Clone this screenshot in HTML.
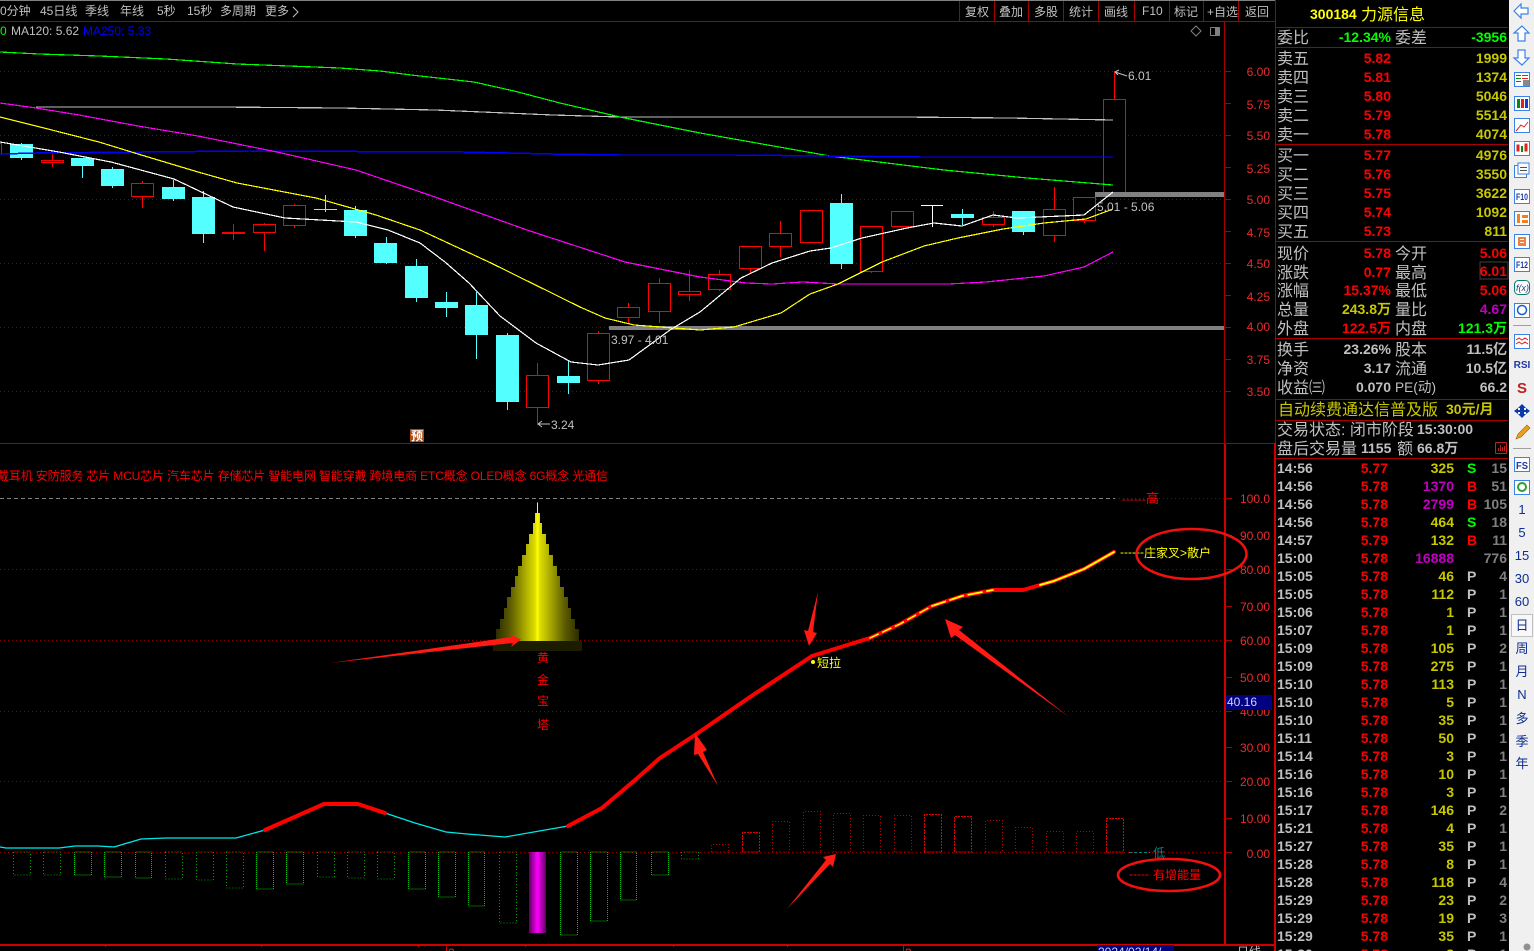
<!DOCTYPE html>
<html lang="zh"><head><meta charset="utf-8"><title>300184 力源信息</title>
<style>
html,body{margin:0;padding:0;background:#000;width:1534px;height:951px;overflow:hidden}
svg{position:absolute;left:0;top:0;display:block}
text{font-family:"Liberation Sans","WenQuanYi Zen Hei","Noto Sans CJK SC",sans-serif;white-space:pre}
.tb{font-size:12px;fill:#c0c0c0}
.ax{font-size:12px;fill:#ee2a2a;text-anchor:end}
.lb{font-size:16px;fill:#c0c0c0}
.n{font-size:14px;font-weight:bold;text-anchor:end}
.R{fill:#ff0000}.Y{fill:#c8c800}.G{fill:#00ff00}.W{fill:#c0c0c0}.M{fill:#c000c0}
.tk{font-size:13px;fill:#0b2f92;text-anchor:middle}
#ticks{position:absolute;left:1276px;top:459px;width:233px;height:492px;overflow:hidden;font:bold 14px/18px "Liberation Sans",sans-serif}
#ticks div{position:relative;height:18px}
#ticks span{position:absolute;top:0}
.t{left:1px;color:#c0c0c0}.p{right:121px;color:#f00}.v{right:55px;color:#c8c800}.v.m{color:#c000c0}
.l{left:191px;color:#c0c0c0}.l.g{color:#0f0}.l.r{color:#f00}.c{right:2px;color:#808080}
</style></head><body>
<svg width="1534" height="951" viewBox="0 0 1534 951" xmlns="http://www.w3.org/2000/svg">
<defs>
<linearGradient id="pg" gradientUnits="userSpaceOnUse" x1="168" x2="417" y1="0" y2="0">
<stop offset="0" stop-color="#2c2c00"/><stop offset=".17" stop-color="#5c5c00"/><stop offset=".3" stop-color="#939300"/><stop offset=".4" stop-color="#c0c000"/><stop offset=".47" stop-color="#dcdc00"/><stop offset=".5" stop-color="#ffff00"/><stop offset=".53" stop-color="#dcdc00"/><stop offset=".6" stop-color="#c0c000"/><stop offset=".7" stop-color="#939300"/><stop offset=".83" stop-color="#5c5c00"/><stop offset="1" stop-color="#2c2c00"/>
</linearGradient>
<linearGradient id="mg" x1="0" x2="1" y1="0" y2="0">
<stop offset="0" stop-color="#600060"/><stop offset=".5" stop-color="#ff00ff"/><stop offset="1" stop-color="#600060"/>
</linearGradient>
</defs>
<rect width="1534" height="951" fill="#000"/>

<!-- price grid -->
<g shape-rendering="crispEdges" stroke="#900000" stroke-dasharray="1 3" fill="none">
<path d="M0 71.500H1224M0 135.500H1224M0 199.500H1224M0 263.500H1224M0 327.500H1224M0 391.500H1224"/>
</g>
<!-- frames -->
<g shape-rendering="crispEdges" fill="none" stroke="#a80000">
<path d="M0 21.500H1275M0 443.500H1275M1224.500 21V443M1275.500 0V951"/>
<path d="M1276 27.500H1508M1276 47.500H1508M1276 144.500H1508M1276 241.500H1508M1276 338.500H1508M1276 399.500H1508M1276 420.500H1508M1276 458.500H1508"/>
<path d="M959.500 0V21M994.500 0V21M1028.500 0V21M1063.500 0V21M1098.500 0V21M1134.500 0V21M1169.500 0V21M1203.500 0V21M1238.500 0V21"/>
<path d="M1224 71.500h7M1224 103.500h7M1224 135.500h7M1224 167.500h7M1224 199.500h7M1224 231.500h7M1224 263.500h7M1224 295.500h7M1224 327.500h7M1224 359.500h7M1224 391.500h7"/>
</g>
<rect x="0" y="0" width="1275" height="1" fill="#808080"/>

<!-- top bar -->
<g class="tb">
<text class="tb" x="0" y="15">0分钟</text><text class="tb" x="40" y="15">45日线</text><text class="tb" x="85" y="15">季线</text><text class="tb" x="120" y="15">年线</text><text class="tb" x="157" y="15">5秒</text><text class="tb" x="187" y="15">15秒</text><text class="tb" x="220" y="15">多周期</text><text class="tb" x="265" y="15">更多</text>
<path d="M293 7l5 5-5 5" fill="none" stroke="#c0c0c0"/>
<text class="tb" x="965" y="16">复权</text><text class="tb" x="999" y="16">叠加</text><text class="tb" x="1034" y="16">多股</text><text class="tb" x="1069" y="16">统计</text><text class="tb" x="1104" y="16">画线</text><text class="tb" x="1142" y="15">F10</text><text class="tb" x="1174" y="16">标记</text><text class="tb" x="1207" y="16">+自选</text><text class="tb" x="1245" y="16">返回</text>
</g>
<!-- MA legend -->
<text x="0" y="35" font-size="12" fill="#00ff00">0</text>
<text x="11" y="35" font-size="12" fill="#c0c0c0">MA120: 5.62</text>
<text x="83" y="35" font-size="12" fill="#0000ff">MA250: 5.33</text>
<path d="M1196 26l5 5-5 5-5-5z" fill="none" stroke="#808080"/>
<rect x="1210" y="27" width="10" height="9" rx="1" fill="#808080"/><rect x="1211" y="28" width="4" height="7" fill="#000"/>

<!-- axis price -->
<g>
<text class="ax" x="1270" y="76">6.00</text><text class="ax" x="1270" y="109">5.75</text><text class="ax" x="1270" y="140">5.50</text><text class="ax" x="1270" y="173">5.25</text><text class="ax" x="1270" y="204">5.00</text><text class="ax" x="1270" y="237">4.75</text><text class="ax" x="1270" y="268">4.50</text><text class="ax" x="1270" y="301">4.25</text><text class="ax" x="1270" y="331">4.00</text><text class="ax" x="1270" y="364">3.75</text><text class="ax" x="1270" y="396">3.50</text>
</g>

<!-- candles -->
<g shape-rendering="crispEdges">
<path fill="none" stroke="#54ffff" d="M21.500 143V160M82.500 158V178M112.500 167V188M173.500 180V201M203.500 191V243M325.500 195V212M355.500 206V238M386.500 237V264M416.500 259V302M446.500 292V317M476.500 292V359M507.500 333V410M568.500 360V394M841.500 194V269M962.500 209V225M1023.500 211V235M314 209.500H337"/>
<path fill="#54ffff" d="M10 144h23v14H10zM71 158h23v8H71zM101 169h23v17H101zM162 187h23v12H162zM192 197h23v37H192zM344 210h23v26H344zM374 243h23v20H374zM405 266h23v32H405zM435 302h23v6H435zM465 305h23v30H465zM496 335h23v67H496zM557 376h23v7H557zM830 203h23v61H830zM951 214h23v4H951zM1012 211h23v21H1012z"/>
<path fill="none" stroke="#ff0000" d="M0 143.500h1.500M1.500 143V155M52.500 154V167M142.500 181V208M233.500 224V240M264.500 223V251M294.500 204V228M537.500 363V425M598.500 331V384M628.500 303V324M659.500 278V323M689.500 270V301M719.500 270V291M750.500 246V274M780.500 221V257M871.500 226V273M993.500 211V227M1054.500 187V242M1084.500 197V223M1114.500 71V192"/>
<g fill="#000" stroke="#ff0000">
<rect x="41.500" y="160.500" width="22" height="2"/><rect x="131.500" y="183.500" width="22" height="13"/><rect x="253.500" y="224.500" width="22" height="8"/><rect x="283.500" y="205.500" width="22" height="20"/>
<rect x="526.500" y="375.500" width="22" height="32"/><rect x="587.500" y="333.500" width="22" height="47"/><rect x="617.500" y="307.500" width="22" height="10"/><rect x="648.500" y="283.500" width="22" height="28"/><rect x="678.500" y="291.500" width="22" height="3"/><rect x="708.500" y="274.500" width="22" height="15"/><rect x="739.500" y="246.500" width="22" height="22"/><rect x="769.500" y="233.500" width="22" height="13"/><rect x="800.500" y="210.500" width="22" height="32"/><rect x="860.500" y="226.500" width="22" height="45"/><rect x="891.500" y="211.500" width="22" height="15"/><rect x="982.500" y="217.500" width="22" height="7"/><rect x="1043.500" y="209.500" width="22" height="26"/><rect x="1073.500" y="197.500" width="22" height="23"/><rect x="1103.500" y="99.500" width="22" height="93"/>
</g>
<rect x="222" y="232" width="23" height="2" fill="#ff0000"/>
<path fill="none" stroke="#fff" d="M921 205.500H943M932.500 205V227"/>
<rect x="1095" y="192" width="129" height="5" fill="#808080"/>
<rect x="609" y="326" width="615" height="4" fill="#808080"/>
</g>

<!-- MA lines -->
<g fill="none" stroke-width="1.200" shape-rendering="crispEdges">
<polyline stroke="#c0c0c0" points="36,107 217,107 340,108 435,110 553,115 620,117 900,117 1009,118 1060,119 1113,120"/>
<polyline stroke="#00ff00" points="0,52 39,54 99,56 166,59 237,64 340,68 380,71 411,75 474,82 514,91 560,103 620,117 700,133 830,156 944,170 1027,178 1113,185"/>
<polyline stroke="#0000ff" stroke-width="1.500" points="0,154 36,153 249,151 463,152 553,154 620,155 736,155 920,157 1113,157"/>
<polyline stroke="#ff00ff" points="0,103 36,108 79,115 138,126 198,136 277,152 356,170 435,197 527,230 625,262 700,277 746,283 772,284 803,282 838,284 948,284 986,282 1044,276 1084,267 1113,252"/>
<polyline stroke="#ffff00" points="0,117 40,127 99,142 138,154 198,172 237,183 316,198 376,215 420,230 491,263 580,307 605,318 634,325 700,330 734,327 781,313 810,294 838,284 882,262 924,246 958,238 1003,229 1044,223 1086,219 1113,209"/>
<polyline stroke="#ffffff" points="0,142 59,152 111,162 174,179 233,207 285,218 356,222 388,230 420,243 445,262 469,283 500,316 536,343 571,362 598,365 629,360 670,330 700,312 741,278 772,263 810,251 831,248 862,238 907,228 934,223 962,226 993,215 1017,218 1084,215 1113,192"/>
</g>

<!-- price annotations -->
<g font-size="12" fill="#c0c0c0">
<text x="1128" y="80">6.01</text><path d="M1115 72l12 4M1115 72l4-2M1115 72l3 3" stroke="#c0c0c0" fill="none"/>
<text x="1097" y="211">5.01 - 5.06</text>
<text x="611" y="344">3.97 - 4.01</text>
<text x="551" y="429">3.24</text><path d="M538 424h12M538 424l4-3M538 424l4 3" stroke="#c0c0c0" fill="none"/>
</g>
<rect x="410" y="429" width="14" height="13" fill="#b04a10"/>
<text x="411" y="440" font-size="12" fill="#fff" font-weight="bold">预</text>

<!-- concept text -->
<text x="-3" y="480" font-size="12" fill="#ff0000" textLength="611" lengthAdjust="spacing">戴耳机 安防服务 芯片 MCU芯片 汽车芯片 存储芯片 智能电网 智能穿戴 跨境电商 ETC概念 OLED概念 6G概念 光通信</text>

<!-- lower grid -->
<g shape-rendering="crispEdges" fill="none">
<path stroke="#808080" stroke-dasharray="4 3" d="M0 498.500H1115"/>
<path stroke="#900000" stroke-dasharray="1 3" d="M0 569.500H1224"/>
<path stroke="#900000" stroke-dasharray="1 3" d="M0 640.500H1224"/>
<path stroke="#900000" stroke-dasharray="1 3" d="M0 711.500H1224"/>
<path stroke="#900000" stroke-dasharray="1 3" d="M0 781.500H1224"/>
<path stroke="#900000" stroke-dasharray="1 3" d="M0 852.500H1224"/>
<path stroke="#900000" stroke-dasharray="1 3" d="M1115 498.500H1224"/>
<path stroke="#d00000" stroke-width="2" d="M1225 444V944M1275 443V951"/>
<path stroke="#d00000" stroke-width="2" d="M0 945H1275"/>
<path stroke="#d00000" d="M105.500 945v2M261.500 945v2M418.500 945v2M446.500 945v6M525.500 945v2M673.500 945v2M787.500 945v2M903.500 945v6"/>
<path stroke="#a80000" d="M1225 498.500h7M1225 535.500h7M1225 569.500h7M1225 606.500h7M1225 640.500h7M1225 677.500h7M1225 711.500h7M1225 747.500h7M1225 781.500h7M1225 818.500h7M1225 852.500h7"/>
</g>
<g>
<text class="ax" x="1270" y="503">100.0</text><text class="ax" x="1270" y="540">90.00</text><text class="ax" x="1270" y="574">80.00</text><text class="ax" x="1270" y="611">70.00</text><text class="ax" x="1270" y="645">60.00</text><text class="ax" x="1270" y="682">50.00</text><text class="ax" x="1270" y="716">40.00</text><text class="ax" x="1270" y="752">30.00</text><text class="ax" x="1270" y="786">20.00</text><text class="ax" x="1270" y="823">10.00</text><text class="ax" x="1270" y="858">0.00</text>
</g>
<rect x="1226" y="695" width="46" height="15" fill="#000080"/>
<text x="1227" y="706" font-size="12" fill="#d0d0ff">40.16</text>

<!-- volume-like bars -->
<g fill="none" stroke="#00a000" stroke-dasharray="1 2" shape-rendering="crispEdges">
<path d="M13.500 852V875H30.500V852ZM43.500 852V875H60.500V852ZM196.500 852V880H213.500V852ZM226.500 852V888H243.500V852ZM317.500 852V877H334.500V852ZM347.500 852V878H364.500V852ZM377.500 852V879H394.500V852ZM499.500 852V923H516.500V852ZM681.500 852V859H698.500V852ZM165.500 852V879H182.500V852Z"/>
</g>
<g fill="none" stroke="#00c000" stroke-dasharray="1 1" shape-rendering="crispEdges">
<path d="M74.500 852V875H91.500V852ZM104.500 852V877H121.500V852ZM135.500 852V878H151.500V852ZM256.500 852V889H273.500V852ZM286.500 852V884H303.500V852ZM408.500 852V889H425.500V852ZM438.500 852V897H455.500V852ZM468.500 852V906H484.500V852ZM560.500 852V935H577.500V852ZM590.500 852V921H607.500V852ZM620.500 852V900H636.500V852ZM651.500 852V875H668.500V852Z"/>
</g>
<rect x="529" y="852" width="17" height="81" fill="url(#mg)" shape-rendering="crispEdges"/>
<g fill="none" stroke="#c00000" stroke-dasharray="1 2" shape-rendering="crispEdges">
<path d="M711.500 852V844.500H728.500V852ZM772.500 852V821.500H789.500V852ZM803.500 852V811.500H820.500V852ZM833.500 852V813.500H850.500V852ZM863.500 852V815.500H880.500V852ZM894.500 852V815.500H911.500V852ZM985.500 852V820.500H1002.500V852ZM1015.500 852V827.500H1032.500V852ZM1046.500 852V831.500H1063.500V852ZM1076.500 852V831.500H1093.500V852Z"/>
</g>
<g fill="none" stroke="#e00000" stroke-dasharray="2 1" shape-rendering="crispEdges">
<path d="M742.500 852V832.500H759.500V852ZM924.500 852V814.500H941.500V852ZM954.500 852V816.500H971.500V852ZM1106.500 852V818.500H1123.500V852Z"/>
</g>

<!-- main line -->
<g fill="none" stroke-linejoin="round" stroke-linecap="round">
<polyline stroke="#00e8e8" stroke-width="1.300" points="0,847 6,848 59,848 75,846 98,846 114,847 141,839 166,838 236,838 265,830"/>
<polyline stroke="#00e8e8" stroke-width="1.300" points="385,813 415,823 446,832 467,834 505,837 568,826"/>
<polyline stroke="#ff0000" stroke-width="4" points="265,830 324,804 358,804 385,813"/>
<polyline stroke="#ff0000" stroke-width="4" points="568,826 602,808 635,780 660,758 695,735 750,697 812,656 870,638 900,624 932,606 962,596 993,590 1023,590 1054,581 1084,569 1114,552"/>
<polyline stroke="#ffff00" stroke-width="1.500" stroke-dasharray="9 5" points="870,638 900,624 932,606"/>
<polyline stroke="#ffff00" stroke-width="1.800" stroke-dasharray="14 5" points="932,606 962,596 993,590"/>
<polyline stroke="#ffff00" stroke-width="2" points="1040,585 1054,581 1084,569 1114,552"/>
</g>
<circle cx="813" cy="662" r="2" fill="#ffff00"/>
<text x="817" y="667" font-size="12" fill="#ffff00">短拉</text>
<text x="1120" y="556" font-size="12" fill="#ffff00" textLength="24" lengthAdjust="spacing">------</text>
<text x="1144" y="557" font-size="12" fill="#ffff00" textLength="67" lengthAdjust="spacing">庄家叉&gt;散户</text>
<text x="1122" y="503" font-size="12" fill="#ff0000">------</text>
<text x="1146" y="503" font-size="13" fill="#ff0000">高</text>
<path d="M1129 852.500h21" stroke="#008888" stroke-dasharray="3 2" shape-rendering="crispEdges"/>
<text x="1153" y="857" font-size="12" fill="#008888">低</text>
<text x="1129" y="878" font-size="12" fill="#ff0000">-----</text>
<text x="1153" y="879" font-size="12" fill="#ff0000">有增能量</text>

<!-- pagoda -->
<g transform="translate(440 490) scale(.3333)" shape-rendering="crispEdges">
<rect x="159" y="453" width="267" height="30" fill="#1c1c00"/>
<rect x="291" y="37" width="3" height="32" fill="#ffff00"/>
<path fill="url(#pg)" d="M285 69H300V99H306V132H318V162H327V195H339V228H351V258H360V291H372V321H384V354H393V387H405V417H417V453H168V417H180V387H192V354H201V321H213V291H225V258H234V228H246V195H258V162H267V132H279V99H285Z"/>
</g>
<g font-size="12" fill="#ff0000" text-anchor="middle">
<text x="543" y="662">黄</text><text x="543" y="684">金</text><text x="543" y="705">宝</text><text x="543" y="729">塔</text>
</g>

<!-- annotations -->
<g fill="#ff1a14">
<path d="M330 663L512 637L509 634L521 639.500L511 647L513 643Z"/>
<path d="M818 592L813 632L817 633L809 646L804 630L808 631Z"/>
<path d="M718 786L703 752L707 750L695 733L694 755L698 754Z"/>
<path d="M1069 717L955 635L951 638L945 619L963 627L959 630Z"/>
<path d="M787 909L826 860L823 857L836 854L833 867L830 864Z"/>
</g>
<g fill="none" stroke="#f01010" stroke-width="2.600">
<ellipse cx="1191.500" cy="554" rx="55" ry="25"/>
<ellipse cx="1169" cy="875" rx="51" ry="16"/>
</g>

<!-- bottom date -->
<rect x="1097" y="945" width="77" height="6" fill="#000080"/>
<text x="1098" y="956" font-size="12" fill="#d0d0ff">2024/02/14/</text>
<text x="905" y="957" font-size="12" fill="#ee2a2a">3</text><text x="448" y="957" font-size="12" fill="#ee2a2a">2</text>
<text x="1237" y="956" font-size="12" fill="#c0c0c0">日线</text>

<!-- quote panel -->
<text x="1310" y="19" font-size="14" font-weight="bold" fill="#ffff00">300184</text>
<text x="1361" y="20" font-size="16" fill="#ffff00">力源信息</text>
<text class="lb" x="1277" y="43">委比</text><text class="n G" x="1391" y="42">-12.34%</text><text class="lb" x="1395" y="43">委差</text><text class="n G" x="1507" y="42">-3956</text>

<g>
<text class="lb" x="1277" y="64">卖五</text><text class="n R" x="1391" y="63">5.82</text><text class="n Y" x="1507" y="63">1999</text>
<text class="lb" x="1277" y="83">卖四</text><text class="n R" x="1391" y="82">5.81</text><text class="n Y" x="1507" y="82">1374</text>
<text class="lb" x="1277" y="102">卖三</text><text class="n R" x="1391" y="101">5.80</text><text class="n Y" x="1507" y="101">5046</text>
<text class="lb" x="1277" y="121">卖二</text><text class="n R" x="1391" y="120">5.79</text><text class="n Y" x="1507" y="120">5514</text>
<text class="lb" x="1277" y="140">卖一</text><text class="n R" x="1391" y="139">5.78</text><text class="n Y" x="1507" y="139">4074</text>
<text class="lb" x="1277" y="161">买一</text><text class="n R" x="1391" y="160">5.77</text><text class="n Y" x="1507" y="160">4976</text>
<text class="lb" x="1277" y="180">买二</text><text class="n R" x="1391" y="179">5.76</text><text class="n Y" x="1507" y="179">3550</text>
<text class="lb" x="1277" y="199">买三</text><text class="n R" x="1391" y="198">5.75</text><text class="n Y" x="1507" y="198">3622</text>
<text class="lb" x="1277" y="218">买四</text><text class="n R" x="1391" y="217">5.74</text><text class="n Y" x="1507" y="217">1092</text>
<text class="lb" x="1277" y="237">买五</text><text class="n R" x="1391" y="236">5.73</text><text class="n Y" x="1507" y="236">811</text>

<text class="lb" x="1277" y="259">现价</text><text class="n R" x="1391" y="258">5.78</text><text class="lb" x="1395" y="259">今开</text><text class="n R" x="1507" y="258">5.06</text>
<text class="lb" x="1277" y="278">涨跌</text><text class="n R" x="1391" y="277">0.77</text><text class="lb" x="1395" y="278">最高</text><rect x="1480" y="262" width="28" height="17" fill="none" stroke="#404040" shape-rendering="crispEdges"/><text class="n R" x="1507" y="276">6.01</text>
<text class="lb" x="1277" y="296">涨幅</text><text class="n R" x="1391" y="295">15.37%</text><text class="lb" x="1395" y="296">最低</text><text class="n R" x="1507" y="295">5.06</text>
<text class="lb" x="1277" y="315">总量</text><text class="n Y" x="1391" y="314">243.8万</text><text class="lb" x="1395" y="315">量比</text><text class="n M" x="1507" y="314">4.67</text>
<text class="lb" x="1277" y="334">外盘</text><text class="n R" x="1391" y="333">122.5万</text><text class="lb" x="1395" y="334">内盘</text><text class="n G" x="1507" y="333">121.3万</text>

<text class="lb" x="1277" y="355">换手</text><text class="n W" x="1391" y="354">23.26%</text><text class="lb" x="1395" y="355">股本</text><text class="n W" x="1507" y="354">11.5亿</text>
<text class="lb" x="1277" y="374">净资</text><text class="n W" x="1391" y="373">3.17</text><text class="lb" x="1395" y="374">流通</text><text class="n W" x="1507" y="373">10.5亿</text>
<text class="lb" x="1277" y="393">收益㈢</text><text class="n W" x="1391" y="392">0.070</text><text class="lb" x="1395" y="392" font-size="14" style="font-size:14px" textLength="41" lengthAdjust="spacingAndGlyphs">PE(动)</text><text class="n W" x="1507" y="392">66.2</text>
</g>

<text x="1278" y="415" font-size="16" fill="#c8c800">自动续费通达信普及版</text>
<text x="1446" y="414" font-size="14" font-weight="bold" fill="#c8c800">30元/月</text>
<text class="lb" x="1277" y="435">交易状态: 闭市阶段</text>
<text x="1417" y="434" font-size="14" font-weight="bold" fill="#c0c0c0">15:30:00</text>
<text class="lb" x="1277" y="454">盘后交易量</text>
<text x="1361" y="453" font-size="14" font-weight="bold" fill="#c0c0c0">1155</text>
<text class="lb" x="1397" y="454">额</text>
<text x="1417" y="453" font-size="14" font-weight="bold" fill="#c0c0c0">66.8万</text>
<g fill="none" stroke="#c02020" shape-rendering="crispEdges"><rect x="1495.500" y="442.500" width="11" height="11" rx="1"/><path d="M1498.500 451v-3M1500.500 451v-6M1502.500 451v-4M1504.500 451v-5"/></g>

<!-- toolbar -->
<rect x="1509" y="0" width="25" height="951" fill="#f0f0f0"/>
<g stroke="#3c82e6" fill="#fff" stroke-width="1.200">
<path d="M1514 11l7-7v4h7v6h-7v4z"/>
<path d="M1522 26l7 7h-4v8h-7v-8h-4z"/>
<path d="M1518 50h7v8h4l-7 7-8-7h4z"/>
</g>
<g shape-rendering="crispEdges">
<g fill="#fff" stroke="#3c82e6">
<rect x="1514.500" y="72.500" width="15" height="14"/><rect x="1514.500" y="96.500" width="15" height="14"/><rect x="1514.500" y="118.500" width="15" height="14"/><rect x="1514.500" y="141.500" width="15" height="14"/><rect x="1514.500" y="165.500" width="12" height="12"/><rect x="1514.500" y="189.500" width="15" height="14"/><rect x="1514.500" y="211.500" width="15" height="14"/><rect x="1514.500" y="234.500" width="15" height="14"/><rect x="1514.500" y="257.500" width="15" height="14"/><rect x="1514.500" y="303.500" width="15" height="14"/><rect x="1514.500" y="334.500" width="15" height="14"/><rect x="1514.500" y="457.500" width="15" height="14"/><rect x="1514.500" y="480.500" width="15" height="14"/>
</g>
<path fill="#0a8a0a" d="M1516 75h5v1h-5zM1516 78h5v1h-5zM1516 81h5v1h-5zM1517 99h3v9h-3z"/>
<path fill="#e02020" d="M1522 75h6v1h-6zM1522 78h6v1h-6zM1521 99h3v9h-3z"/>
<path fill="#1c3ad0" d="M1525 99h3v9h-3z"/>
<rect x="1523" y="80" width="6" height="6" fill="#888"/>
<rect x="1518" y="163" width="11" height="11" fill="#fff" stroke="#3c82e6"/>
<path fill="#505050" d="M1520 167h7v1h-7zM1520 170h7v1h-7z"/>
<path fill="#f08020" d="M1517 214h3v9h-3zM1522 215h6v3h-6zM1522 220h6v3h-6z"/>
<path fill="#f08040" d="M1518 237h8v9h-8z"/>
<path fill="#fff" d="M1520 239h4v1h-4zM1520 242h4v1h-4z"/>
<rect x="1513" y="325" width="18" height="1" fill="#a0a0a0"/>
<rect x="1513" y="448" width="18" height="1" fill="#a0a0a0"/>
<rect x="1511.500" y="614.500" width="21" height="22" fill="#f8f8f8" stroke="#c0c0c0"/>
</g>
<path d="M1516 131l5-6 3 2 4-5" fill="none" stroke="#e02020"/>
<g stroke="#e02020" fill="#e02020"><rect x="1517" y="145" width="2" height="6"/><rect x="1525" y="144" width="2" height="7"/></g><rect x="1521" y="146" width="2" height="6" fill="#0a8a0a"/>
<g font-size="10" fill="#1c3aa8" font-weight="bold">
<text x="1516" y="200" font-size="9" textLength="12" lengthAdjust="spacingAndGlyphs">F10</text>
<text x="1516" y="268" font-size="9" textLength="12" lengthAdjust="spacingAndGlyphs">F12</text>
<text x="1516" y="469" font-size="10" textLength="12" lengthAdjust="spacingAndGlyphs">FS</text>
</g>
<rect x="1514.500" y="280.500" width="15" height="14" rx="4" fill="#fff" stroke="#0a7a6a"/>
<text x="1516" y="291" font-size="9" font-style="italic" fill="#1c3a80">f(x)</text>
<circle cx="1522" cy="310" r="4.500" fill="none" stroke="#1c5ad0" stroke-width="1.500"/>
<path d="M1516 340l3-2 3 2 3-2 3 2M1516 344l3-2 3 2 3-2 3 2" fill="none" stroke="#e02020"/>
<text x="1522" y="368" font-size="10" font-weight="bold" fill="#2238a8" text-anchor="middle">RSI</text>
<text x="1522" y="393" font-size="15" font-weight="bold" fill="#c02020" text-anchor="middle">S</text>
<path d="M1522 404l4 4h-2v2h2v-2l4 3-4 3v-2h-2v2h2l-4 4-4-4h2v-2h-2v2l-4-3 4-3v2h2v-2h-2z" fill="#0b3aa8"/>
<path d="M1516 439l2-5 9-9 3 3-9 9z" fill="#e8a020" stroke="#906010" stroke-width=".6"/>
<circle cx="1522" cy="487" r="4" fill="none" stroke="#30a030" stroke-width="2"/>
<g>
<text class="tk" x="1522" y="514" font-size="12">1</text><text class="tk" x="1522" y="537" font-size="12">5</text><text class="tk" x="1522" y="560" font-size="12">15</text><text class="tk" x="1522" y="583" font-size="12">30</text><text class="tk" x="1522" y="606" font-size="12">60</text>
<text class="tk" x="1522" y="630">日</text><text class="tk" x="1522" y="653">周</text><text class="tk" x="1522" y="676">月</text><text class="tk" x="1522" y="699" font-size="12">N</text><text class="tk" x="1522" y="723">多</text><text class="tk" x="1522" y="746">季</text><text class="tk" x="1522" y="768">年</text>
</g>
<circle cx="1527" cy="947" r="3.500" fill="#909090"/>
</svg>

<div id="ticks">
<div><span class="t">14:56</span><span class="p">5.77</span><span class="v">325</span><span class="l g">S</span><span class="c">15</span></div>
<div><span class="t">14:56</span><span class="p">5.78</span><span class="v m">1370</span><span class="l r">B</span><span class="c">51</span></div>
<div><span class="t">14:56</span><span class="p">5.78</span><span class="v m">2799</span><span class="l r">B</span><span class="c">105</span></div>
<div><span class="t">14:56</span><span class="p">5.78</span><span class="v">464</span><span class="l g">S</span><span class="c">18</span></div>
<div><span class="t">14:57</span><span class="p">5.79</span><span class="v">132</span><span class="l r">B</span><span class="c">11</span></div>
<div><span class="t">15:00</span><span class="p">5.78</span><span class="v m">16888</span><span class="c">776</span></div>
<div><span class="t">15:05</span><span class="p">5.78</span><span class="v">46</span><span class="l">P</span><span class="c">4</span></div>
<div><span class="t">15:05</span><span class="p">5.78</span><span class="v">112</span><span class="l">P</span><span class="c">1</span></div>
<div><span class="t">15:06</span><span class="p">5.78</span><span class="v">1</span><span class="l">P</span><span class="c">1</span></div>
<div><span class="t">15:07</span><span class="p">5.78</span><span class="v">1</span><span class="l">P</span><span class="c">1</span></div>
<div><span class="t">15:09</span><span class="p">5.78</span><span class="v">105</span><span class="l">P</span><span class="c">2</span></div>
<div><span class="t">15:09</span><span class="p">5.78</span><span class="v">275</span><span class="l">P</span><span class="c">1</span></div>
<div><span class="t">15:10</span><span class="p">5.78</span><span class="v">113</span><span class="l">P</span><span class="c">1</span></div>
<div><span class="t">15:10</span><span class="p">5.78</span><span class="v">5</span><span class="l">P</span><span class="c">1</span></div>
<div><span class="t">15:10</span><span class="p">5.78</span><span class="v">35</span><span class="l">P</span><span class="c">1</span></div>
<div><span class="t">15:11</span><span class="p">5.78</span><span class="v">50</span><span class="l">P</span><span class="c">1</span></div>
<div><span class="t">15:14</span><span class="p">5.78</span><span class="v">3</span><span class="l">P</span><span class="c">1</span></div>
<div><span class="t">15:16</span><span class="p">5.78</span><span class="v">10</span><span class="l">P</span><span class="c">1</span></div>
<div><span class="t">15:16</span><span class="p">5.78</span><span class="v">3</span><span class="l">P</span><span class="c">1</span></div>
<div><span class="t">15:17</span><span class="p">5.78</span><span class="v">146</span><span class="l">P</span><span class="c">2</span></div>
<div><span class="t">15:21</span><span class="p">5.78</span><span class="v">4</span><span class="l">P</span><span class="c">1</span></div>
<div><span class="t">15:27</span><span class="p">5.78</span><span class="v">35</span><span class="l">P</span><span class="c">1</span></div>
<div><span class="t">15:28</span><span class="p">5.78</span><span class="v">8</span><span class="l">P</span><span class="c">1</span></div>
<div><span class="t">15:28</span><span class="p">5.78</span><span class="v">118</span><span class="l">P</span><span class="c">4</span></div>
<div><span class="t">15:29</span><span class="p">5.78</span><span class="v">23</span><span class="l">P</span><span class="c">2</span></div>
<div><span class="t">15:29</span><span class="p">5.78</span><span class="v">19</span><span class="l">P</span><span class="c">3</span></div>
<div><span class="t">15:29</span><span class="p">5.78</span><span class="v">35</span><span class="l">P</span><span class="c">1</span></div>
<div><span class="t">15:30</span><span class="p">5.78</span><span class="v">8</span><span class="l">P</span><span class="c">1</span></div>
</div>
</body></html>
